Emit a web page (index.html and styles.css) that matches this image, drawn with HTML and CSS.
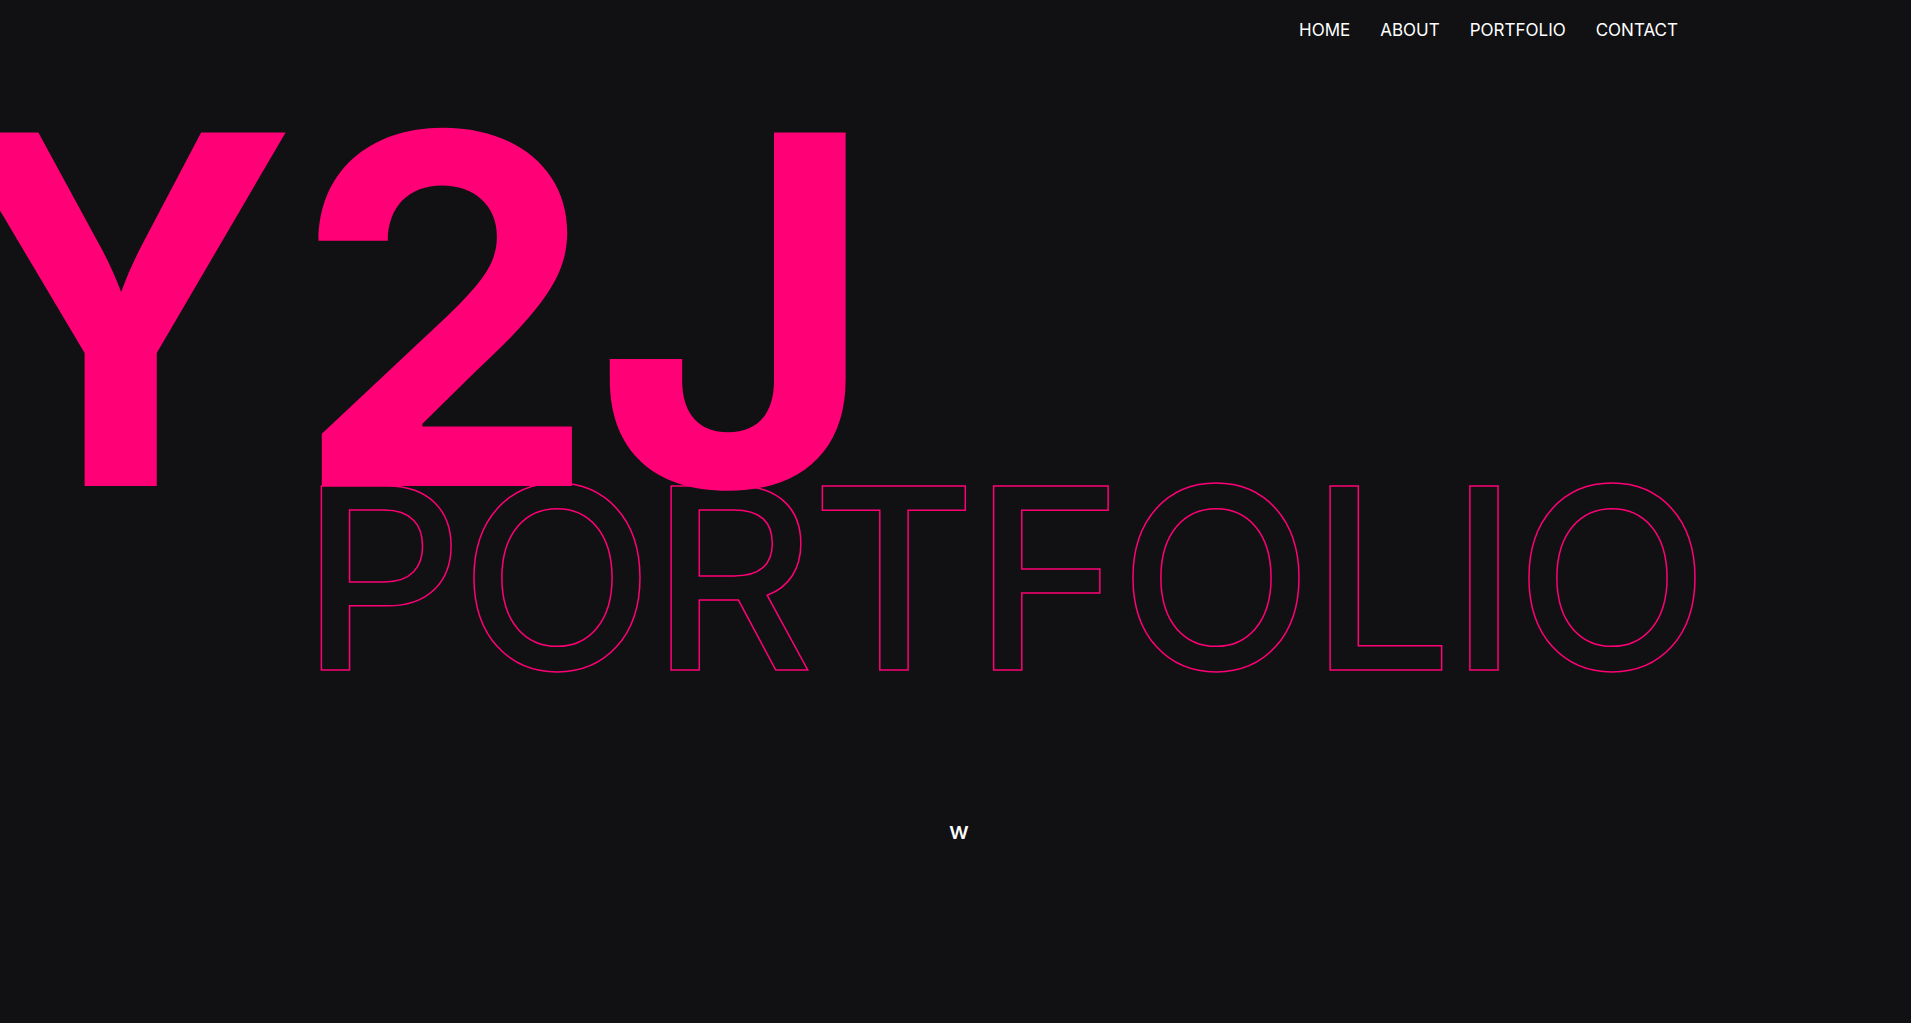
FILE: index.html
```html
<!DOCTYPE html>
<html lang="en">
<head>
<meta charset="utf-8">
<title>Y2J Portfolio</title>
<link rel="stylesheet" href="styles.css">
</head>
<body>
<header class="site-header">
  <nav class="nav">
    <a class="nav-link" href="#">HOME</a>
    <a class="nav-link" href="#">ABOUT</a>
    <a class="nav-link" href="#">PORTFOLIO</a>
    <a class="nav-link" href="#">CONTACT</a>
  </nav>
</header>
<main class="hero">
  <h1 class="hero-title">Y2J</h1>
  <p class="hero-sub">PORTFOLIO</p>
  <p class="hero-type">w</p>
</main>
</body>
</html>
```
FILE: styles.css
```css
* { box-sizing: border-box; }
html, body {
  margin: 0;
  padding: 0;
  background: #111113;
  color: #ffffff;
  font-family: "Inter", "Noto Sans", sans-serif;
  overflow: hidden;
  height: 100%;
}
.site-header {
  height: 60px;
  padding-top: 20px;
  padding-right: 233px;
  display: flex;
  justify-content: flex-end;
}
.nav {
  display: flex;
  gap: 30px;
  align-items: flex-start;
}
.nav-link {
  color: #ffffff;
  text-decoration: none;
  font-size: 17px;
  line-height: normal;
  font-weight: 400;
}
.hero {
  padding-top: 66.7px;
}
.hero-title {
  margin: 0 0 0 -58px;
  font-size: 486px;
  font-weight: 700;
  line-height: 0.75;
  color: #ff0077;
  letter-spacing: -0.01em;
}
.hero-sub {
  margin: -7px 0 0;
  padding-left: 301px;
  font-size: 253px;
  font-weight: 500;
  line-height: 0.75;
  letter-spacing: -3.3px;
  color: transparent;
  -webkit-text-stroke: 1.5px #ff0077;
}
.hero-type {
  margin: 142px 0 0;
  padding-left: 7px;
  text-align: center;
  font-size: 24px;
  font-weight: 500;
  line-height: normal;
}
```
